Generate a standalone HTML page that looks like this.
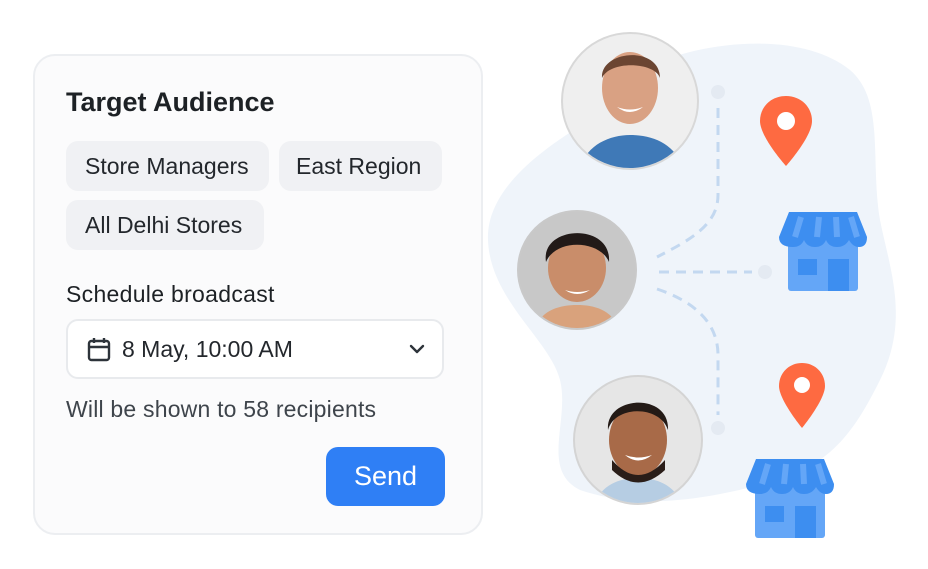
<!DOCTYPE html>
<html><head><meta charset="utf-8"><style>
*{margin:0;padding:0;box-sizing:border-box}
body{width:928px;height:569px;background:#fff;font-family:"Liberation Sans",sans-serif;position:relative;overflow:hidden;color:#1f2328}
.card{position:absolute;left:33px;top:54px;width:450px;height:481px;border:2px solid #eceef1;border-radius:22px;background:#fbfbfc}
.abs{position:absolute}
.chip{position:absolute;height:50px;background:#f0f1f4;border-radius:12px;font-size:23px;line-height:50px;padding-left:19px;color:#23272c}
</style></head><body>
<div class="card"></div>
<div class="abs" style="left:66px;top:87px;font-size:27px;font-weight:bold;color:#1d2125">Target Audience</div>
<div class="chip" style="left:66px;top:141px;width:203px">Store Managers</div>
<div class="chip" style="left:279px;top:141px;width:163px;padding-left:17px">East Region</div>
<div class="chip" style="left:66px;top:200px;width:198px">All Delhi Stores</div>
<div class="abs" style="left:66px;top:281px;font-size:23px;color:#1d2125;letter-spacing:0.3px">Schedule broadcast</div>
<div class="abs" style="left:66px;top:319px;width:378px;height:60px;border:2px solid #e8eaed;border-radius:12px;background:#fff"></div>
<svg class="abs" style="left:87px;top:337px" width="24" height="26" viewBox="0 0 24 26"><rect x="2" y="4" width="20" height="19" rx="2.5" fill="none" stroke="#2d333a" stroke-width="2.4"/><line x1="2" y1="10" x2="22" y2="10" stroke="#2d333a" stroke-width="2.4"/><line x1="7" y1="1" x2="7" y2="6" stroke="#2d333a" stroke-width="2.4"/><line x1="17" y1="1" x2="17" y2="6" stroke="#2d333a" stroke-width="2.4"/></svg>
<div class="abs" style="left:122px;top:336px;font-size:23px;color:#23272c">8 May, 10:00 AM</div>
<svg class="abs" style="left:408px;top:343px" width="18" height="12" viewBox="0 0 18 12"><path d="M3 3 L9 9 L15 3" fill="none" stroke="#2d333a" stroke-width="2.4" stroke-linecap="round" stroke-linejoin="round"/></svg>
<div class="abs" style="left:66px;top:396px;font-size:23px;color:#3e444b;letter-spacing:0.2px">Will be shown to 58 recipients</div>
<div class="abs" style="left:326px;top:447px;width:119px;height:59px;background:#2f7ff5;border-radius:12px;color:#fff;font-size:27px;line-height:59px;text-align:center">Send</div>

<svg class="abs" style="left:0;top:0" width="928" height="569" viewBox="0 0 928 569">
<defs>
<clipPath id="c1"><circle cx="630" cy="101" r="67"/></clipPath>
<clipPath id="c2"><circle cx="577" cy="270" r="58"/></clipPath>
<clipPath id="c3"><circle cx="638" cy="440" r="63"/></clipPath>
</defs>
<path d="M640 70 C700 40 800 30 850 70 C885 100 870 160 880 220 C890 270 910 320 880 380 C855 430 830 470 760 485 C700 500 640 510 580 490 C540 470 570 420 560 380 C550 340 490 300 488 240 C486 190 540 150 590 120 C610 100 620 80 640 70Z" fill="#eff4fa"/>
<g fill="none" stroke="#c3d8f0" stroke-width="3" stroke-dasharray="10 7">
<path d="M718 108 L718 195 C718 225 690 240 657 257"/>
<path d="M659 272 L752 272"/>
<path d="M657 289 C690 300 718 320 718 355 L718 415"/>
</g>
<circle cx="718" cy="92" r="7" fill="#e4eaf2"/>
<circle cx="765" cy="272" r="7" fill="#e4eaf2"/>
<circle cx="718" cy="428" r="7" fill="#e4eaf2"/>
<circle cx="630" cy="101" r="69" fill="#d8d8d8"/>
<g clip-path="url(#c1)"><rect x="560" y="30" width="140" height="140" fill="#efefef"/>
<path d="M580 170 C585 145 610 135 630 135 C655 135 675 145 685 170Z" fill="#3f79b7"/>
<ellipse cx="630" cy="88" rx="28" ry="36" fill="#d9a183"/>
<path d="M602 78 C600 50 660 45 660 78 C655 62 610 60 602 78Z" fill="#6b4532"/>
<path d="M617 107 Q630 117 643 107 Q630 112 617 107Z" fill="#fff"/></g>
<circle cx="577" cy="270" r="60" fill="#c9c9c9"/>
<g clip-path="url(#c2)"><rect x="515" y="210" width="125" height="125" fill="#c8c8c8"/>
<path d="M535 330 C540 310 560 305 577 305 C595 305 612 310 620 330Z" fill="#d9a27c"/>
<ellipse cx="577" cy="268" rx="29" ry="34" fill="#c98d6a"/>
<path d="M546 262 C540 225 612 222 609 262 C600 240 556 238 546 262Z" fill="#221a18"/>
<path d="M565 290 Q577 298 590 290 Q577 294 565 290Z" fill="#fff"/></g>
<circle cx="638" cy="440" r="65" fill="#d4d4d4"/>
<g clip-path="url(#c3)"><rect x="570" y="375" width="135" height="135" fill="#e6e6e6"/>
<path d="M595 505 C600 485 620 478 638 478 C657 478 675 485 682 505Z" fill="#b6cde3"/>
<ellipse cx="638" cy="440" rx="29" ry="36" fill="#a86a48"/>
<path d="M612 460 Q638 490 665 460 L665 470 Q638 495 612 470Z" fill="#2a1d18"/>
<path d="M608 430 C605 395 670 392 668 430 C660 405 615 405 608 430Z" fill="#241a16"/>
<path d="M625 455 Q638 466 652 455 Q638 460 625 455Z" fill="#fff"/></g>
<path d="M786 96 C771 96 760 107 760 121 C760 137 786 166 786 166 C786 166 812 137 812 121 C812 107 801 96 786 96Z" fill="#fe6a41"/>
<circle cx="786" cy="121" r="9" fill="#fff"/>
<path d="M802 363 C789 363 779 373 779 386 C779 400 802 428 802 428 C802 428 825 400 825 386 C825 373 815 363 802 363Z" fill="#fe6a41"/>
<circle cx="802" cy="385" r="8" fill="#fff"/>
<g transform="translate(779,212)">
<rect x="9" y="25" width="70" height="54" rx="3" fill="#64a6f7"/>
<path d="M10 0 H78 L88 25 Q88 35 80 35 Q74 35 70 28 Q66 35 58 35 Q50 35 47 28 Q44 35 36 35 Q28 35 25 28 Q22 35 14 35 Q0 35 0 25Z" fill="#3d8ef0"/>
<path d="M22 5 L16 25 M40 5 L38 25 M57 5 L58 25 M72 5 L78 25" stroke="#64a6f7" stroke-width="6"/>
<rect x="19" y="47" width="19" height="16" fill="#3d8ef0"/>
<rect x="49" y="47" width="21" height="32" fill="#3d8ef0"/>
</g>
<g transform="translate(746,459)">
<rect x="9" y="25" width="70" height="54" rx="3" fill="#64a6f7"/>
<path d="M10 0 H78 L88 25 Q88 35 80 35 Q74 35 70 28 Q66 35 58 35 Q50 35 47 28 Q44 35 36 35 Q28 35 25 28 Q22 35 14 35 Q0 35 0 25Z" fill="#3d8ef0"/>
<path d="M22 5 L16 25 M40 5 L38 25 M57 5 L58 25 M72 5 L78 25" stroke="#64a6f7" stroke-width="6"/>
<rect x="19" y="47" width="19" height="16" fill="#3d8ef0"/>
<rect x="49" y="47" width="21" height="32" fill="#3d8ef0"/>
</g>
</svg>
</body></html>
